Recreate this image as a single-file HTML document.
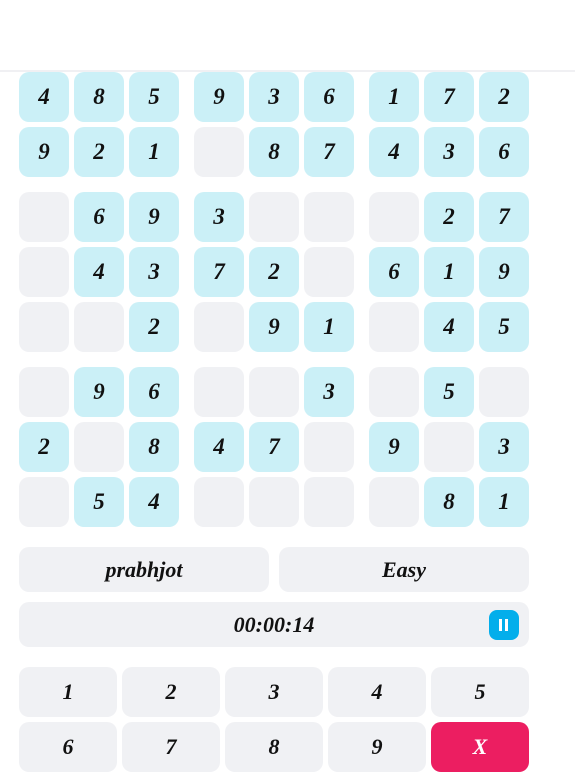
<!DOCTYPE html>
<html><head><meta charset="utf-8"><style>
body{margin:0;width:575px;height:782px;background:#fff;position:relative;overflow:hidden;font-family:"Liberation Serif",serif;font-style:italic;font-weight:bold;color:#111}
.hd{position:absolute;left:0;top:0;width:575px;height:70px;background:#fff;border-bottom:2px solid #f0f0f3;z-index:2}
.c{position:absolute;width:50px;height:50px;border-radius:10px;background:#f0f1f4;display:flex;align-items:center;justify-content:center;font-size:23px}
.f{background:#cbf0f7}
.b{position:absolute;border-radius:10px;background:#f0f1f4;display:flex;align-items:center;justify-content:center;font-size:22px}
</style></head><body>
<div class="hd"></div>
<div id="g"></div>
<script>
var d=["485936172","921_87436","_693___27","_4372_619","__2_91_45","_96__3_5_","2_847_9_3","_54____81"];
var xs=[19,74,129,194,249,304,369,424,479],ys=[72,127,192,247,302,367,422,477],h="";
for(var r=0;r<8;r++)for(var c=0;c<9;c++){var v=d[r][c];h+='<div class="c'+(v!="_"?" f":"")+'" style="left:'+xs[c]+'px;top:'+ys[r]+'px">'+(v!="_"?v:"")+'</div>';}
document.getElementById("g").innerHTML=h;
</script>
<div class="b" style="left:19px;top:547px;width:250px;height:45px">prabhjot</div>
<div class="b" style="left:279px;top:547px;width:250px;height:45px">Easy</div>
<div class="b" style="left:19px;top:602px;width:510px;height:45px">00:00:14</div>
<div style="position:absolute;left:489px;top:610px;width:30px;height:30px;border-radius:8px;background:#03aeeb"><div style="position:absolute;left:10px;top:9px;width:3px;height:12px;background:#fff"></div><div style="position:absolute;left:16px;top:9px;width:3px;height:12px;background:#fff"></div></div>
<div class="b" style="left:19px;top:667px;width:98px;height:50px">1</div>
<div class="b" style="left:122px;top:667px;width:98px;height:50px">2</div>
<div class="b" style="left:225px;top:667px;width:98px;height:50px">3</div>
<div class="b" style="left:328px;top:667px;width:98px;height:50px">4</div>
<div class="b" style="left:431px;top:667px;width:98px;height:50px">5</div>
<div class="b" style="left:19px;top:722px;width:98px;height:50px">6</div>
<div class="b" style="left:122px;top:722px;width:98px;height:50px">7</div>
<div class="b" style="left:225px;top:722px;width:98px;height:50px">8</div>
<div class="b" style="left:328px;top:722px;width:98px;height:50px">9</div>
<div class="b" style="left:431px;top:722px;width:98px;height:50px;background:#ec1e61;color:#fff">X</div>
</body></html>
